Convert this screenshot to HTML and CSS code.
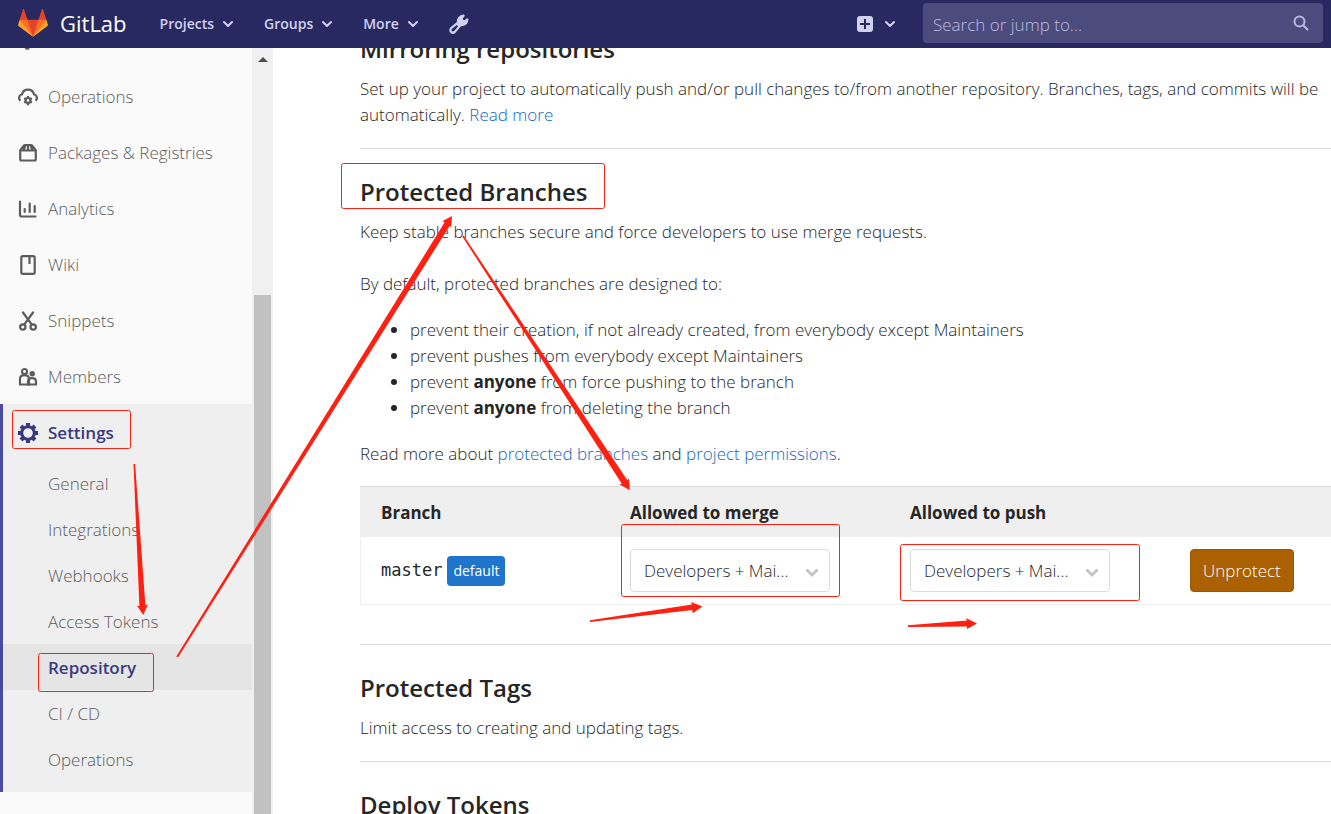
FILE: index.html
```html
<!DOCTYPE html>
<html lang="en">
<head>
<meta charset="utf-8">
<title>Repository Settings · GitLab</title>
<link rel="stylesheet" href="styles.css">
</head>
<body>
<div class="app">
  <header class="topbar">
    <a class="brand" href="#">
      <svg class="tanuki" viewBox="0 0 36 36" aria-hidden="true">
        <path fill="#e24329" d="M2 14l9.38 9v-9l-4-12.28c-.205-.632-1.176-.632-1.38 0z"/>
        <path fill="#e24329" d="M34 14l-9.38 9v-9l4-12.28c.205-.632 1.176-.632 1.38 0z"/>
        <path fill="#e24329" d="M18 34.38L3 14h30z"/>
        <path fill="#fc6d26" d="M18 34.38L11.38 14H2l4 11z"/>
        <path fill="#fc6d26" d="M18 34.38L24.62 14H34l-4 11z"/>
        <path fill="#fca326" d="M2 14L.1 20.16c-.18.565 0 1.2.5 1.56L18 34.38z"/>
        <path fill="#fca326" d="M34 14l1.9 6.16c.18.565 0 1.2-.5 1.56L18 34.38z"/>
      </svg>
      <span class="brand-name">GitLab</span>
    </a>
    <nav class="menu" aria-label="Main">
      <button class="menu-item" type="button">Projects <svg class="chevron" viewBox="0 0 12 12"><path d="M2 4l4 4 4-4"/></svg></button>
      <button class="menu-item" type="button">Groups <svg class="chevron" viewBox="0 0 12 12"><path d="M2 4l4 4 4-4"/></svg></button>
      <button class="menu-item" type="button">More <svg class="chevron" viewBox="0 0 12 12"><path d="M2 4l4 4 4-4"/></svg></button>
      <a class="menu-item" href="#" aria-label="Admin Area"><svg class="icon" viewBox="0 0 20 20"><path fill="none" stroke="currentColor" stroke-width="2.2" stroke-linejoin="round" d="M2.1 14.2 9 8.600C8.300 5 10.800 1.800 14.600 1.700L12.700 4.300 13.300 6.700 15.700 7.300 18.300 5.400C18.300 9.200 15 11.700 11.500 11L5.800 17.900A2.600 2.600 0 0 1 2.100 14.200Z"/><path fill="currentColor" d="M9 8.600C8.300 5 10.800 1.800 14.600 1.700L12.700 4.300 13.300 6.700 15.700 7.300 18.300 5.400C18.300 9.200 15 11.700 11.500 11L9.800 13 7 10.200z"/></svg></a>
    </nav>
    <button class="menu-item create" type="button" aria-label="New"><svg class="plus" viewBox="0 0 16 16"><rect width="16" height="16" rx="3" fill="currentColor"/><path d="M8 3v10M3 8h10" stroke="#292961" stroke-width="2"/></svg><svg class="chevron" viewBox="0 0 12 12"><path d="M2 4l4 4 4-4"/></svg></button>
    <label class="search">
      <input type="text" placeholder="Search or jump to..." aria-label="Search or jump to">
      <svg class="search-icon" viewBox="0 0 16 16"><circle cx="6.500" cy="6.500" r="5"/><path d="M10.500 10.500l4 4"/></svg>
    </label>
  </header>

  <div class="body">
    <aside class="sidebar">
      <nav class="side-nav" aria-label="Project">
        <ul class="side-list">
          <li class="scrolled-off"><svg viewBox="0 0 20 4"><path d="M6.500 0h5.500q-1 2-2.800 2T6.500 0z" fill="#666"/></svg></li>
          <li><a class="side-link" href="#"><svg class="icon" viewBox="0 0 20 20"><path class="line" d="M2.500 13.700A3.700 3.700 0 0 1 4 7.200a6.200 6.200 0 0 1 12 0 3.700 3.700 0 0 1 1.500 6.500"/><circle class="line" cx="10" cy="13.400" r="2.400"/><path class="line" d="M10 9v2M10 16v2.300M6.200 11.200l1.600 1M12.200 14.600l1.600 1M6.200 15.600l1.600-1M12.200 12.200l1.600-1"/></svg>Operations</a></li>
          <li><a class="side-link" href="#"><svg class="icon" viewBox="0 0 20 20"><path class="line" d="M2.200 7.500h15.600v8.500q0 1.500-1.500 1.500H3.700q-1.500 0-1.500-1.500zL5.600 2.800q.5-.7 1.400-.7h6q.9 0 1.400.7L17.800 7.500M10 2v5M7 2.500L6 7M13 2.500l1 4.500"/></svg>Packages &amp; Registries</a></li>
          <li><a class="side-link" href="#"><svg class="icon" viewBox="0 0 20 20"><path class="line round" d="M2 2.500v13.300q0 1.700 1.700 1.700H17.500M6.700 10v3M11.700 4.500V13M16.700 7v6"/></svg>Analytics</a></li>
          <li><a class="side-link" href="#"><svg class="icon" viewBox="0 0 20 20"><rect class="line" x="3.300" y="1.200" width="13.400" height="17.600" rx="1.500"/><path class="line" d="M11.500 1v8"/></svg>Wiki</a></li>
          <li><a class="side-link" href="#"><svg class="icon" viewBox="0 0 20 20"><path class="line round" d="M5 1.500l8.800 12.200M15 1.500L6.200 13.700"/><circle class="line" cx="4.800" cy="16" r="2.700"/><circle class="line" cx="15.200" cy="16" r="2.700"/></svg>Snippets</a></li>
          <li><a class="side-link" href="#"><svg class="icon" viewBox="0 0 20 20"><circle class="line" cx="6.500" cy="4.500" r="2.500"/><path class="line" d="M2 17.500V12q0-3.800 4.500-3.800T11 12v5.500z"/><circle cx="14.200" cy="6.800" r="2.700" fill="currentColor"/><path class="line" d="M10 17.500v-3q0-3.300 4-3.300t4 3.300v3z"/></svg>Members</a></li>
        </ul>
        <div class="side-group">
          <a class="side-link current" href="#"><svg class="icon" viewBox="0 0 20 20"><circle class="line" cx="10" cy="10" r="6.300"/><path stroke="currentColor" stroke-width="4" d="M10 0v3M10 17v3M0 10h3M17 10h3M3 3l2 2M15 15l2 2M3 17l2-2M15 5l2-2"/></svg>Settings</a>
          <ul class="side-list">
            <li><a class="sub-link" href="#">General</a></li>
            <li><a class="sub-link" href="#">Integrations</a></li>
            <li><a class="sub-link" href="#">Webhooks</a></li>
            <li><a class="sub-link" href="#">Access Tokens</a></li>
            <li><a class="sub-link active" href="#" aria-current="page">Repository</a></li>
            <li><a class="sub-link" href="#">CI / CD</a></li>
            <li><a class="sub-link" href="#">Operations</a></li>
          </ul>
        </div>
      </nav>
      <div class="scrollbar" aria-hidden="true">
        <svg class="scroll-up" viewBox="0 0 10 5"><path d="M5 0l5 5H0z" fill="#505050"/></svg>
        <div class="thumb"></div>
      </div>
    </aside>

    <main class="content">
      <section class="panel first">
        <h2>Mirroring repositories</h2>
        <p class="wide">Set up your project to automatically push and/or pull changes to/from another repository. Branches, tags, and commits will be<br>automatically. <a href="#">Read more</a></p>
      </section>
      <section class="panel branches">
        <h2>Protected Branches</h2>
        <p>Keep stable branches secure and force developers to use merge requests.</p>
        <p class="intro">By default, protected branches are designed to:</p>
        <ul class="rules">
          <li>prevent their creation, if not already created, from everybody except Maintainers</li>
          <li>prevent pushes from everybody except Maintainers</li>
          <li>prevent <strong>anyone</strong> from force pushing to the branch</li>
          <li>prevent <strong>anyone</strong> from deleting the branch</li>
        </ul>
        <p class="more">Read more about <a href="#">protected branches</a> and <a href="#">project permissions</a>.</p>
        <table class="grid">
          <colgroup><col class="c-branch"><col class="c-access"><col class="c-access"><col></colgroup>
          <thead>
            <tr><th>Branch</th><th>Allowed to merge</th><th>Allowed to push</th><th></th></tr>
          </thead>
          <tbody>
            <tr>
              <td><span class="ref">master</span><span class="badge">default</span></td>
              <td><div class="picker"><select aria-label="Allowed to merge"><option>Developers + Mai...</option></select><svg class="caret" viewBox="0 0 14 10"><path d="M1.500 1.500L7 7l5.500-5.500"/></svg></div></td>
              <td><div class="picker"><select aria-label="Allowed to push"><option>Developers + Mai...</option></select><svg class="caret" viewBox="0 0 14 10"><path d="M1.500 1.500L7 7l5.500-5.500"/></svg></div></td>
              <td><button class="unprotect" type="button">Unprotect</button></td>
            </tr>
          </tbody>
        </table>
      </section>
      <section class="panel">
        <h2>Protected Tags</h2>
        <p>Limit access to creating and updating tags.</p>
      </section>
      <section class="panel">
        <h2>Deploy Tokens</h2>
      </section>
    </main>
  </div>

  <svg class="markup" width="1331" height="814" viewBox="0 0 1331 814" aria-hidden="true">
    <g fill="none" stroke="#ff2012">
      <rect x="12.500" y="410.500" width="118" height="38" rx="2"/>
      <rect x="38.500" y="653.500" width="115" height="38" rx="2"/>
      <rect x="341.500" y="163.500" width="263" height="45" rx="2"/>
      <rect x="621.500" y="524.500" width="218" height="72" rx="2"/>
      <rect x="900.500" y="544.500" width="239" height="56" rx="2"/>
    </g>
    <g fill="#ff2012">
      <path d="M133.500 464h1.600L145.400 605.500 148 604.300 143.300 615 137 605.700 139.400 606z"/>
      <path d="M176.300 656.600L178 657.500 449.600 226 451.300 227 452 216 442.700 221 444.500 222.600z"/>
      <path d="M462.300 236.400L463.700 235.600 627.400 480.300 629 478.300 629.800 490.300 619.300 484.300 621.800 483.800z"/>
      <path d="M590 620.300L692 604.500 691 602 702.500 606.500 692.700 613.300 692.300 610 590 622z"/>
      <path d="M908 625.300L967 620.500 966 618 977 623.500 967 629 967 626.500 908 627z"/>
    </g>
  </svg>
</div>
</body>
</html>
```
FILE: styles.css
```css
* { box-sizing: border-box; }

body {
  margin: 0;
  font-family: "Open Sans", "Noto Sans", sans-serif;
  font-size: 17px;
  font-weight: 350;
  line-height: 26px;
  color: #262626;
  background: #fff;
}

a { color: #1068bf; text-decoration: none; }
button, input, select { font: inherit; }

.app {
  position: relative;
  display: flex;
  flex-direction: column;
  height: 100vh;
  overflow: hidden;
}

/* Top bar */
.topbar {
  display: flex;
  flex: none;
  align-items: center;
  height: 48px;
  padding: 0 8px 2px 18px;
  background: #292961;
  color: #d1d1f0;
}

.brand { display: flex; align-items: center; gap: 12px; margin-right: 33px; color: #fff; }
.tanuki { width: 30px; height: 30px; }
.brand-name { font-size: 22px; font-weight: 400; }

.menu { display: flex; align-items: center; gap: 30px; }
.menu-item {
  display: flex;
  align-items: center;
  gap: 8px;
  padding: 1px 0 0;
  border: 0;
  background: none;
  color: #d1d1f0;
  font-size: 14px;
  font-weight: 600;
}
.chevron { width: 12px; height: 12px; }
.chevron path { fill: none; stroke: currentColor; stroke-width: 2; stroke-linecap: round; stroke-linejoin: round; }
.plus { width: 16px; height: 16px; }
.create { gap: 11px; margin-left: auto; }
.icon { flex: none; width: 20px; height: 20px; }

.search { position: relative; width: 400px; margin-left: 27px; }
.search input {
  display: block;
  width: 100%;
  height: 40px;
  padding: 2px 40px 0 10px;
  border: 0;
  border-radius: 4px;
  background: #4b4b7d;
  color: #d1d1f0;
}
.search input::placeholder { color: #bcbce2; opacity: 1; }
.search-icon { position: absolute; top: 12px; right: 14px; width: 16px; height: 16px; fill: none; stroke: #b9b9dd; stroke-width: 2; stroke-linecap: round; }

/* Sidebar */
.body { display: flex; flex: 1; min-height: 0; }
.sidebar { display: flex; flex: none; width: 273px; background: #fafafa; }
.side-nav { flex: 1; overflow: hidden; }
.side-list { margin: 0; padding: 0; list-style: none; }
.scrolled-off { height: 20px; padding-left: 18px; }
.scrolled-off svg { display: block; width: 20px; height: 4px; }
.side-link {
  display: flex;
  align-items: center;
  gap: 10px;
  height: 56px;
  padding: 2px 0 0 18px;
  color: #5c5c5c;
}
.line { fill: none; stroke: currentColor; stroke-width: 2.2; }
.round { stroke-linecap: round; }
.side-group { padding-bottom: 10px; background: #efefef; box-shadow: inset 3px 0 #4b4ba3; }
.current { color: #393982; font-weight: 600; }
.current .line { stroke-width: 3; }
.sub-link {
  display: flex;
  align-items: center;
  height: 46px;
  padding: 2px 0 0 48px;
  color: #5c5c5c;
}
.active { background: rgba(0, 0, 0, 0.04); color: #393982; font-weight: 600; }

.scrollbar { display: flex; flex-direction: column; align-items: center; width: 21px; background: #f0f0f0; }
.scroll-up { flex: none; width: 10px; height: 5px; margin-top: 9px; }
.thumb { flex: 1; width: 17px; margin-top: 233px; background: #c1c1c1; }

/* Settings content */
.content { flex: 1; min-width: 0; padding-left: 87px; overflow: hidden; }
.panel { padding: 28px 0 20px; border-top: 1px solid #dbdbdb; }
.first { margin-top: -14px; padding-top: 0; border-top: 0; }
.branches { padding-bottom: 39px; }
h2 { margin: 0 0 12px; font-size: 24px; font-weight: 600; line-height: 30px; }
p { margin: 0; }
.wide { white-space: nowrap; }
.intro { margin: 26px 0 20px; }
.rules { margin: 0 0 20px; padding-left: 50px; }
.more { margin-bottom: 19px; }
strong { font-weight: 700; }

.grid {
  width: 100%;
  border: 1px solid #efefef;
  border-right: 0;
  border-spacing: 0;
  border-top-color: #dbdbdb;
  table-layout: fixed;
}
.c-branch { width: 249px; }
.c-access { width: 280px; }
th, td { padding: 0 20px; text-align: left; }
th { height: 50px; padding-top: 2px; background: #efefef; font-weight: 700; }
td { height: 67px; }
.ref { font-family: "DejaVu Sans Mono", monospace; font-weight: 400; }
.badge {
  display: inline-block;
  margin-left: 5px;
  padding: 2px 6px;
  border-radius: 4px;
  background: #1f75cb;
  color: #fff;
  font-size: 14px;
  font-weight: 400;
}
.picker { position: relative; width: 200px; }
.picker select {
  display: block;
  width: 100%;
  height: 43px;
  padding: 0 34px 0 13px;
  border: 1px solid #dbdbdb;
  border-radius: 4px;
  appearance: none;
  background: #fff;
  color: #262626;
}
.caret { position: absolute; top: 19px; right: 11px; width: 14px; height: 10px; fill: none; stroke: #c4c4c4; stroke-width: 3; pointer-events: none; }
.unprotect {
  height: 43px;
  padding: 0 12px;
  border: 1px solid #9e5400;
  border-radius: 4px;
  background: #ab6100;
  color: #fff;
}

/* Hand-drawn callouts lie over the whole page */
.markup { position: absolute; top: 0; left: 0; pointer-events: none; }
```
